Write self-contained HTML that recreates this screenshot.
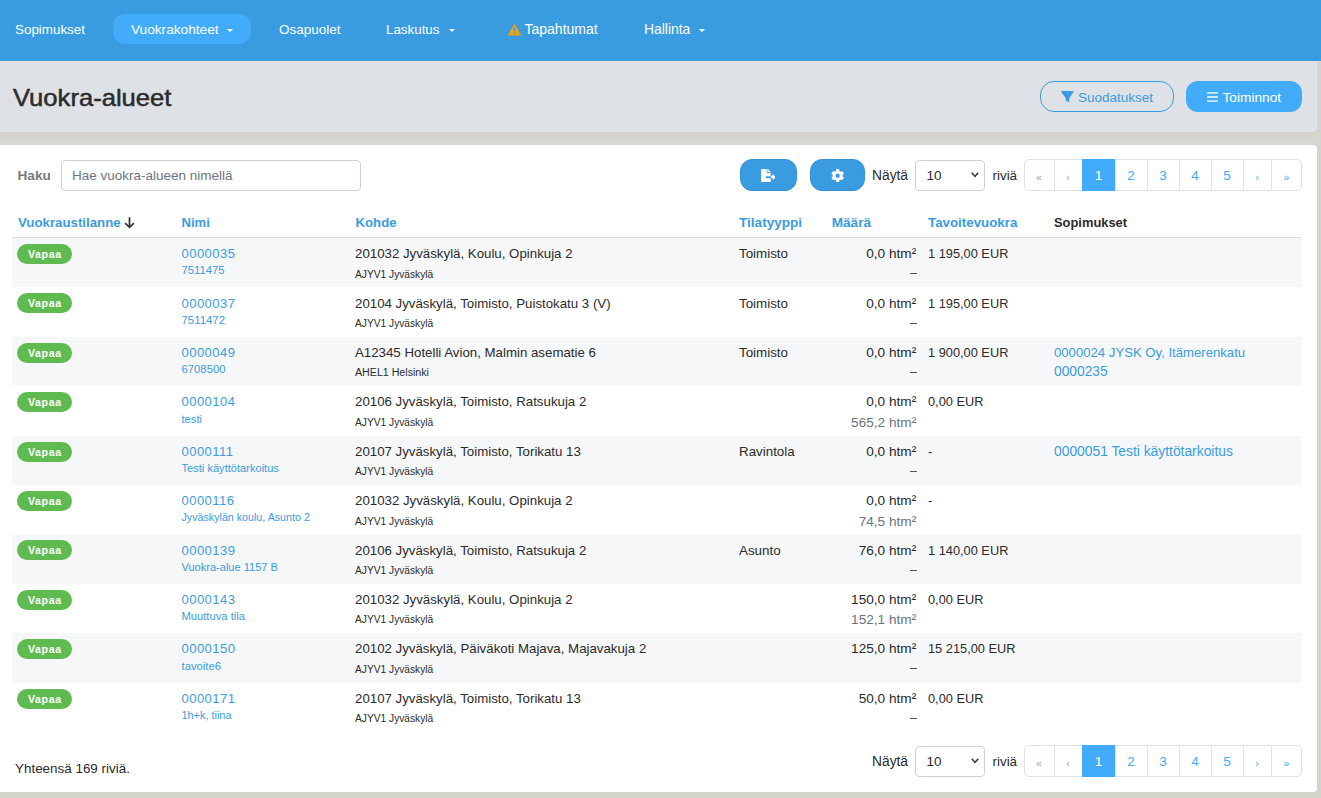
<!DOCTYPE html>
<html><head><meta charset="utf-8"><title>Vuokra-alueet</title><style>
*{margin:0;padding:0;box-sizing:border-box}
html,body{width:1321px;height:798px;overflow:hidden;background:#d5d5ce;font-family:"Liberation Sans", sans-serif}
.t{position:absolute;white-space:nowrap}
#nav{position:absolute;left:0;top:0;width:1321px;height:61px;background:#3a9ce0}
.pill{position:absolute;border-radius:12px}
.caret{position:absolute;width:0;height:0;border-left:3px solid transparent;border-right:3px solid transparent;border-top:3px solid #fff}
#hdr{position:absolute;left:0;top:61px;width:1317px;height:71px;background:#dee1e5;border-radius:0 0 4px 0}
#card{position:absolute;left:0;top:145px;width:1317px;height:647px;background:#fff;border-radius:0 4px 4px 0}
.btn{position:absolute;border-radius:12px}
.inp{position:absolute;border:1px solid #ccd2d9;border-radius:4px;background:#fff}
.ibtn{position:absolute;border-radius:12px;background:#3a9ce0;border:1px solid #3591d4}
.pg{position:absolute;border:1px solid #dee2e6;border-radius:5px;height:32px !important;width:278px !important}
.badge{position:absolute;left:17px;width:55px;height:20px;border-radius:10px;background:#5fbb4f;color:#fff;font-weight:bold;font-size:10.6px;letter-spacing:0.65px;padding-left:0.65px;line-height:20px;text-align:center}
</style></head><body>
<div id="nav"></div>
<div class="pill" style="left:113px;top:14px;width:138px;height:30px;background:#42acfb"></div>
<div class="t " style="left:15px;top:22.1px;font-size:13.4px;line-height:15px;color:#fff;font-weight:normal;">Sopimukset</div>
<div class="t " style="left:131px;top:22.1px;font-size:13.66px;line-height:15px;color:#fff;font-weight:normal;">Vuokrakohteet</div>
<div class="caret" style="left:227px;top:29px"></div>
<div class="t " style="left:279px;top:22.1px;font-size:13.47px;line-height:15px;color:#fff;font-weight:normal;">Osapuolet</div>
<div class="t " style="left:386px;top:22.1px;font-size:13.37px;line-height:15px;color:#fff;font-weight:normal;">Laskutus</div>
<div class="caret" style="left:449px;top:29px"></div>
<svg style="position:absolute;left:508px;top:23.5px" width="13" height="12" viewBox="0 0 13 12"><path d="M6.5 0.8 L12.3 10.9 H0.7 Z" fill="#f0a00f" stroke="#f0a00f" stroke-width="1.2" stroke-linejoin="round"/><rect x="5.85" y="3.3" width="1.3" height="4.1" rx="0.6" fill="#3a9ce0"/><rect x="5.85" y="8.6" width="1.3" height="1.5" rx="0.6" fill="#3a9ce0"/></svg>
<div class="t " style="left:524.5px;top:21.1px;font-size:14.0px;line-height:16px;color:#fff;font-weight:normal;">Tapahtumat</div>
<div class="t " style="left:644px;top:21.1px;font-size:13.9px;line-height:16px;color:#fff;font-weight:normal;">Hallinta</div>
<div class="caret" style="left:699px;top:29px"></div>
<div id="hdr"></div>
<div class="t " style="left:12.8px;top:84.8px;font-size:23.6px;line-height:26px;color:#2b2b2b;font-weight:normal;-webkit-text-stroke:0.5px #2b2b2b;transform:scaleX(1.085);transform-origin:0 0;">Vuokra-alueet</div>
<div class="btn" style="left:1040px;top:81px;width:134px;height:31px;border:1px solid #3a9ce0;border-radius:14px;"></div>
<svg style="position:absolute;left:1061px;top:90.5px" width="13" height="12" viewBox="0 0 13 12"><path d="M0 0.7 Q0 0 0.7 0 H12.3 Q13 0 12.7 0.6 L8.2 7.6 V11.3 L4.9 9.8 V7.6 L0.3 0.9 Z" fill="#3a9ce0"/></svg>
<div class="t " style="left:1078px;top:90px;font-size:13.5px;line-height:15px;color:#3a9ce0;font-weight:normal;">Suodatukset</div>
<div class="btn" style="left:1186px;top:81px;width:116px;height:31px;background:#42acfb"></div>
<svg style="position:absolute;left:1207px;top:92px" width="11" height="10" viewBox="0 0 11 10"><rect x="0" y="0.2" width="11" height="1.3" rx="0.5" fill="#fff"/><rect x="0" y="4.35" width="11" height="1.3" rx="0.5" fill="#fff"/><rect x="0" y="8.5" width="11" height="1.3" rx="0.5" fill="#fff"/></svg>
<div class="t " style="left:1222.5px;top:90px;font-size:13.7px;line-height:15px;color:#fff;font-weight:normal;">Toiminnot</div>
<div style="position:absolute;left:0;top:132px;width:1317px;height:13px;background:linear-gradient(#d2d2cb,#d9d9d3)"></div>
<div id="card"></div>
<div class="t " style="left:17.5px;top:168px;font-size:13.6px;line-height:15px;color:#7a7a7a;font-weight:bold;">Haku</div>
<div class="inp" style="left:61px;top:160px;width:300px;height:31px"></div>
<div class="t " style="left:72px;top:168px;font-size:13.5px;line-height:15px;color:#6c757d;font-weight:normal;">Hae vuokra-alueen nimellä</div>
<div class="ibtn" style="left:740px;top:159px;width:57px;height:32px"></div>
<svg style="position:absolute;left:760.8px;top:169px" width="14.6" height="13" viewBox="0 0 576 512"><path fill="#fff" d="M384 121.9c0-6.3-2.5-12.4-7-16.9L279.1 7c-4.5-4.5-10.6-7-17-7H256v128h128zM571 308l-95.7-96.4c-10.1-10.1-27.4-3-27.4 11.3V288h-64v64h64v65.2c0 14.3 17.3 21.4 27.4 11.3L571 332c6.6-6.6 6.6-17.4 0-24zm-379 28v-32c0-8.8 7.2-16 16-16h176V160H248c-13.2 0-24-10.8-24-24V0H24C10.7 0 0 10.7 0 24v464c0 13.3 10.7 24 24 24h336c13.3 0 24-10.7 24-24V368H208c-8.8 0-16-7.2-16-16z"/></svg>
<div class="ibtn" style="left:810px;top:159px;width:55px;height:32px"></div>
<svg style="position:absolute;left:830.6px;top:168.7px" width="13.3" height="13.3" viewBox="0 0 512 512"><path fill="#fff" d="M487.4 315.7l-42.6-24.6c4.3-23.2 4.3-47 0-70.2l42.6-24.6c4.9-2.8 7.1-8.6 5.5-14-11.1-35.6-30-67.8-54.7-94.6-3.8-4.1-10-5.1-14.8-2.3L380.8 110c-17.9-15.4-38.5-27.3-60.8-35.1V25.8c0-5.6-3.9-10.5-9.4-11.7-36.7-8.2-74.3-7.8-109.2 0-5.5 1.2-9.4 6.1-9.4 11.7V75c-22.2 7.9-42.8 19.8-60.8 35.1L88.7 85.5c-4.9-2.8-11-1.9-14.8 2.3-24.7 26.7-43.6 58.9-54.7 94.6-1.7 5.4.6 11.2 5.5 14L67.3 221c-4.300 23.2-4.3 47 0 70.2l-42.6 24.6c-4.9 2.8-7.1 8.6-5.5 14 11.1 35.6 30 67.8 54.7 94.6 3.8 4.1 10 5.1 14.8 2.3l42.6-24.6c17.9 15.4 38.5 27.3 60.8 35.1v49.2c0 5.6 3.9 10.5 9.4 11.7 36.7 8.2 74.3 7.8 109.2 0 5.5-1.2 9.4-6.1 9.4-11.7v-49.2c22.2-7.9 42.8-19.8 60.8-35.1l42.6 24.6c4.9 2.8 11 1.9 14.8-2.3 24.7-26.7 43.6-58.9 54.7-94.6 1.5-5.5-.7-11.3-5.6-14.1zM256 336c-44.1 0-80-35.9-80-80s35.9-80 80-80 80 35.9 80 80-35.9 80-80 80z"/></svg>
<div class="t " style="left:872px;top:168px;font-size:13.8px;line-height:15px;color:#2b2b2b;font-weight:normal;">Näytä</div><div class="inp" style="left:915px;top:160px;width:70px;height:31px"></div><div class="t " style="left:926.5px;top:168px;font-size:13.5px;line-height:15px;color:#2b2b2b;font-weight:normal;">10</div><svg style="position:absolute;left:971px;top:172px" width="8" height="6" viewBox="0 0 8 6"><path d="M0.8 0.8 L4 4.4 L7.2 0.8" fill="none" stroke="#333" stroke-width="1.5"/></svg><div class="t " style="left:992.5px;top:168px;font-size:13.4px;line-height:15px;color:#2b2b2b;font-weight:normal;">riviä</div><div class="pg" style="left:1024px;top:159px;width:275px;height:30px"></div><div class="t" style="left:1024px;top:168.5px;width:30px;text-align:center;font-size:10.5px;line-height:16px;color:#9aa0a6">«</div><div style="position:absolute;left:1054px;top:159px;width:1px;height:32px;background:#dee2e6"></div><div class="t" style="left:1054px;top:168.5px;width:28px;text-align:center;font-size:10.5px;line-height:16px;color:#9aa0a6">‹</div><div style="position:absolute;left:1082px;top:159px;width:1px;height:32px;background:#dee2e6"></div><div style="position:absolute;left:1082px;top:159px;width:34px;height:32px;background:#42acfb"></div><div class="t" style="left:1082px;top:168px;width:33px;text-align:center;font-size:13.5px;line-height:16px;color:#fff">1</div><div style="position:absolute;left:1115px;top:159px;width:1px;height:32px;background:#dee2e6"></div><div class="t" style="left:1115px;top:168px;width:32px;text-align:center;font-size:13.5px;line-height:16px;color:#42acfb">2</div><div style="position:absolute;left:1147px;top:159px;width:1px;height:32px;background:#dee2e6"></div><div class="t" style="left:1147px;top:168px;width:32px;text-align:center;font-size:13.5px;line-height:16px;color:#42acfb">3</div><div style="position:absolute;left:1179px;top:159px;width:1px;height:32px;background:#dee2e6"></div><div class="t" style="left:1179px;top:168px;width:32px;text-align:center;font-size:13.5px;line-height:16px;color:#42acfb">4</div><div style="position:absolute;left:1211px;top:159px;width:1px;height:32px;background:#dee2e6"></div><div class="t" style="left:1211px;top:168px;width:32px;text-align:center;font-size:13.5px;line-height:16px;color:#42acfb">5</div><div style="position:absolute;left:1243px;top:159px;width:1px;height:32px;background:#dee2e6"></div><div class="t" style="left:1243px;top:168.5px;width:28px;text-align:center;font-size:10.5px;line-height:16px;color:#42acfb">›</div><div style="position:absolute;left:1271px;top:159px;width:1px;height:32px;background:#dee2e6"></div><div class="t" style="left:1271px;top:168.5px;width:31px;text-align:center;font-size:10.5px;line-height:16px;color:#42acfb">»</div>
<div class="t " style="left:18px;top:215px;font-size:13.26px;line-height:15px;color:#3a9ce0;font-weight:bold;">Vuokraustilanne</div>
<svg style="position:absolute;left:123.7px;top:216.8px" width="11" height="12" viewBox="0 0 11 12"><path d="M5.5 0.3 V10.2 M1.1 6.1 L5.5 10.4 L9.9 6.1" fill="none" stroke="#333" stroke-width="1.7"/></svg>
<div class="t " style="left:181.5px;top:215px;font-size:13.1px;line-height:15px;color:#3a9ce0;font-weight:bold;">Nimi</div>
<div class="t " style="left:355.5px;top:215px;font-size:13.2px;line-height:15px;color:#3a9ce0;font-weight:bold;">Kohde</div>
<div class="t " style="left:739px;top:215px;font-size:13.59px;line-height:15px;color:#3a9ce0;font-weight:bold;">Tilatyyppi</div>
<div class="t " style="left:831.7px;top:215px;font-size:13.6px;line-height:15px;color:#3a9ce0;font-weight:bold;">Määrä</div>
<div class="t " style="left:928px;top:215px;font-size:13.33px;line-height:15px;color:#3a9ce0;font-weight:bold;">Tavoitevuokra</div>
<div class="t " style="left:1054px;top:215px;font-size:12.9px;line-height:15px;color:#2b2b2b;font-weight:bold;">Sopimukset</div>
<div style="position:absolute;left:12px;top:237px;width:1290px;height:1px;background:#dcdfe2"></div>
<div style="position:absolute;left:12px;top:238px;width:1290px;height:49px;background:#f6f7f9"></div>
<div class="badge" style="left:17px;top:244.0px">Vapaa</div>
<div class="t " style="left:181.5px;top:246.2px;font-size:13.0px;line-height:15px;color:#3a9ce0;font-weight:normal;letter-spacing:0.46px;">0000035</div>
<div class="t " style="left:181.5px;top:264.4px;font-size:11.3px;line-height:12px;color:#3a9ce0;font-weight:normal;">7511475</div>
<div class="t " style="left:355px;top:246.2px;font-size:13.27px;line-height:15px;color:#2b2b2b;font-weight:normal;">201032 Jyväskylä, Koulu, Opinkuja 2</div>
<div class="t " style="left:355px;top:268.5px;font-size:10.21px;line-height:11px;color:#2b2b2b;font-weight:normal;">AJYV1 Jyväskylä</div>
<div class="t " style="left:739px;top:246.2px;font-size:13.36px;line-height:15px;color:#2b2b2b;font-weight:normal;">Toimisto</div>
<div class="t " style="right:404.8px;top:246.2px;font-size:13.63px;line-height:15px;color:#2b2b2b;font-weight:normal;">0,0 htm²</div>
<div style="position:absolute;left:910px;top:273.2px;width:7px;height:1px;background:#555"></div>
<div class="t " style="left:928px;top:246.2px;font-size:12.8px;line-height:15px;color:#2b2b2b;font-weight:normal;">1 195,00 EUR</div>
<div class="badge" style="left:17px;top:293.4px">Vapaa</div>
<div class="t " style="left:181.5px;top:295.6px;font-size:13.0px;line-height:15px;color:#3a9ce0;font-weight:normal;letter-spacing:0.46px;">0000037</div>
<div class="t " style="left:181.5px;top:313.8px;font-size:11.4px;line-height:12px;color:#3a9ce0;font-weight:normal;">7511472</div>
<div class="t " style="left:355px;top:295.6px;font-size:13.27px;line-height:15px;color:#2b2b2b;font-weight:normal;">20104 Jyväskylä, Toimisto, Puistokatu 3 (V)</div>
<div class="t " style="left:355px;top:317.9px;font-size:10.21px;line-height:11px;color:#2b2b2b;font-weight:normal;">AJYV1 Jyväskylä</div>
<div class="t " style="left:739px;top:295.6px;font-size:13.36px;line-height:15px;color:#2b2b2b;font-weight:normal;">Toimisto</div>
<div class="t " style="right:404.8px;top:295.6px;font-size:13.63px;line-height:15px;color:#2b2b2b;font-weight:normal;">0,0 htm²</div>
<div style="position:absolute;left:910px;top:322.59999999999997px;width:7px;height:1px;background:#555"></div>
<div class="t " style="left:928px;top:295.6px;font-size:12.8px;line-height:15px;color:#2b2b2b;font-weight:normal;">1 195,00 EUR</div>
<div style="position:absolute;left:12px;top:337px;width:1290px;height:49px;background:#f6f7f9"></div>
<div class="badge" style="left:17px;top:342.8px">Vapaa</div>
<div class="t " style="left:181.5px;top:345.0px;font-size:13.0px;line-height:15px;color:#3a9ce0;font-weight:normal;letter-spacing:0.46px;">0000049</div>
<div class="t " style="left:181.5px;top:363.2px;font-size:11.3px;line-height:12px;color:#3a9ce0;font-weight:normal;">6708500</div>
<div class="t " style="left:355px;top:345.0px;font-size:13.27px;line-height:15px;color:#2b2b2b;font-weight:normal;">A12345 Hotelli Avion, Malmin asematie 6</div>
<div class="t " style="left:355px;top:366.3px;font-size:10.65px;line-height:12px;color:#2b2b2b;font-weight:normal;">AHEL1 Helsinki</div>
<div class="t " style="left:739px;top:345.0px;font-size:13.36px;line-height:15px;color:#2b2b2b;font-weight:normal;">Toimisto</div>
<div class="t " style="right:404.8px;top:345.0px;font-size:13.63px;line-height:15px;color:#2b2b2b;font-weight:normal;">0,0 htm²</div>
<div style="position:absolute;left:910px;top:372.0px;width:7px;height:1px;background:#555"></div>
<div class="t " style="left:928px;top:345.0px;font-size:12.8px;line-height:15px;color:#2b2b2b;font-weight:normal;">1 900,00 EUR</div>
<div class="t " style="left:1054px;top:345.0px;font-size:13.15px;line-height:15px;color:#3a9ce0;font-weight:normal;">0000024 JYSK Oy, Itämerenkatu</div>
<div class="t " style="left:1054px;top:364.0px;font-size:13.8px;line-height:15px;color:#3a9ce0;font-weight:normal;">0000235</div>
<div class="badge" style="left:17px;top:392.2px">Vapaa</div>
<div class="t " style="left:181.5px;top:394.4px;font-size:13.0px;line-height:15px;color:#3a9ce0;font-weight:normal;letter-spacing:0.46px;">0000104</div>
<div class="t " style="left:181.5px;top:412.6px;font-size:11.2px;line-height:12px;color:#3a9ce0;font-weight:normal;">testi</div>
<div class="t " style="left:355px;top:394.4px;font-size:13.27px;line-height:15px;color:#2b2b2b;font-weight:normal;">20106 Jyväskylä, Toimisto, Ratsukuja 2</div>
<div class="t " style="left:355px;top:416.7px;font-size:10.21px;line-height:11px;color:#2b2b2b;font-weight:normal;">AJYV1 Jyväskylä</div>
<div class="t " style="right:404.8px;top:394.4px;font-size:13.63px;line-height:15px;color:#2b2b2b;font-weight:normal;">0,0 htm²</div>
<div class="t " style="right:404.8px;top:414.7px;font-size:13.63px;line-height:15px;color:#6c757d;font-weight:normal;">565,2 htm²</div>
<div class="t " style="left:928px;top:394.4px;font-size:12.8px;line-height:15px;color:#2b2b2b;font-weight:normal;">0,00 EUR</div>
<div style="position:absolute;left:12px;top:436px;width:1290px;height:49px;background:#f6f7f9"></div>
<div class="badge" style="left:17px;top:441.6px">Vapaa</div>
<div class="t " style="left:181.5px;top:443.8px;font-size:13.0px;line-height:15px;color:#3a9ce0;font-weight:normal;letter-spacing:0.46px;">0000111</div>
<div class="t " style="left:181.5px;top:462.0px;font-size:11.1px;line-height:12px;color:#3a9ce0;font-weight:normal;">Testi käyttötarkoitus</div>
<div class="t " style="left:355px;top:443.8px;font-size:13.27px;line-height:15px;color:#2b2b2b;font-weight:normal;">20107 Jyväskylä, Toimisto, Torikatu 13</div>
<div class="t " style="left:355px;top:466.1px;font-size:10.21px;line-height:11px;color:#2b2b2b;font-weight:normal;">AJYV1 Jyväskylä</div>
<div class="t " style="left:739px;top:443.8px;font-size:13.36px;line-height:15px;color:#2b2b2b;font-weight:normal;">Ravintola</div>
<div class="t " style="right:404.8px;top:443.8px;font-size:13.63px;line-height:15px;color:#2b2b2b;font-weight:normal;">0,0 htm²</div>
<div style="position:absolute;left:910px;top:470.8px;width:7px;height:1px;background:#555"></div>
<div class="t " style="left:928px;top:443.8px;font-size:12.8px;line-height:15px;color:#2b2b2b;font-weight:normal;">-</div>
<div class="t " style="left:1054px;top:442.8px;font-size:13.84px;line-height:16px;color:#3a9ce0;font-weight:normal;">0000051 Testi käyttötarkoitus</div>
<div class="badge" style="left:17px;top:491.0px">Vapaa</div>
<div class="t " style="left:181.5px;top:493.2px;font-size:13.0px;line-height:15px;color:#3a9ce0;font-weight:normal;letter-spacing:0.46px;">0000116</div>
<div class="t " style="left:181.5px;top:511.4px;font-size:10.7px;line-height:12px;color:#3a9ce0;font-weight:normal;">Jyväskylän koulu, Asunto 2</div>
<div class="t " style="left:355px;top:493.2px;font-size:13.27px;line-height:15px;color:#2b2b2b;font-weight:normal;">201032 Jyväskylä, Koulu, Opinkuja 2</div>
<div class="t " style="left:355px;top:515.5px;font-size:10.21px;line-height:11px;color:#2b2b2b;font-weight:normal;">AJYV1 Jyväskylä</div>
<div class="t " style="right:404.8px;top:493.2px;font-size:13.63px;line-height:15px;color:#2b2b2b;font-weight:normal;">0,0 htm²</div>
<div class="t " style="right:404.8px;top:513.5px;font-size:13.63px;line-height:15px;color:#6c757d;font-weight:normal;">74,5 htm²</div>
<div class="t " style="left:928px;top:493.2px;font-size:12.8px;line-height:15px;color:#2b2b2b;font-weight:normal;">-</div>
<div style="position:absolute;left:12px;top:534px;width:1290px;height:50px;background:#f6f7f9"></div>
<div class="badge" style="left:17px;top:540.4px">Vapaa</div>
<div class="t " style="left:181.5px;top:542.6px;font-size:13.0px;line-height:15px;color:#3a9ce0;font-weight:normal;letter-spacing:0.46px;">0000139</div>
<div class="t " style="left:181.5px;top:560.8px;font-size:11.06px;line-height:12px;color:#3a9ce0;font-weight:normal;">Vuokra-alue 1157 B</div>
<div class="t " style="left:355px;top:542.6px;font-size:13.27px;line-height:15px;color:#2b2b2b;font-weight:normal;">20106 Jyväskylä, Toimisto, Ratsukuja 2</div>
<div class="t " style="left:355px;top:564.9px;font-size:10.21px;line-height:11px;color:#2b2b2b;font-weight:normal;">AJYV1 Jyväskylä</div>
<div class="t " style="left:739px;top:542.6px;font-size:13.36px;line-height:15px;color:#2b2b2b;font-weight:normal;">Asunto</div>
<div class="t " style="right:404.8px;top:542.6px;font-size:13.63px;line-height:15px;color:#2b2b2b;font-weight:normal;">76,0 htm²</div>
<div style="position:absolute;left:910px;top:569.6px;width:7px;height:1px;background:#555"></div>
<div class="t " style="left:928px;top:542.6px;font-size:12.8px;line-height:15px;color:#2b2b2b;font-weight:normal;">1 140,00 EUR</div>
<div class="badge" style="left:17px;top:589.8px">Vapaa</div>
<div class="t " style="left:181.5px;top:592.0px;font-size:13.0px;line-height:15px;color:#3a9ce0;font-weight:normal;letter-spacing:0.46px;">0000143</div>
<div class="t " style="left:181.5px;top:610.2px;font-size:11.2px;line-height:12px;color:#3a9ce0;font-weight:normal;">Muuttuva tila</div>
<div class="t " style="left:355px;top:592.0px;font-size:13.27px;line-height:15px;color:#2b2b2b;font-weight:normal;">201032 Jyväskylä, Koulu, Opinkuja 2</div>
<div class="t " style="left:355px;top:614.3px;font-size:10.21px;line-height:11px;color:#2b2b2b;font-weight:normal;">AJYV1 Jyväskylä</div>
<div class="t " style="right:404.8px;top:592.0px;font-size:13.63px;line-height:15px;color:#2b2b2b;font-weight:normal;">150,0 htm²</div>
<div class="t " style="right:404.8px;top:612.3px;font-size:13.63px;line-height:15px;color:#6c757d;font-weight:normal;">152,1 htm²</div>
<div class="t " style="left:928px;top:592.0px;font-size:12.8px;line-height:15px;color:#2b2b2b;font-weight:normal;">0,00 EUR</div>
<div style="position:absolute;left:12px;top:633px;width:1290px;height:50px;background:#f6f7f9"></div>
<div class="badge" style="left:17px;top:639.2px">Vapaa</div>
<div class="t " style="left:181.5px;top:641.4px;font-size:13.0px;line-height:15px;color:#3a9ce0;font-weight:normal;letter-spacing:0.46px;">0000150</div>
<div class="t " style="left:181.5px;top:659.6px;font-size:11.28px;line-height:12px;color:#3a9ce0;font-weight:normal;">tavoite6</div>
<div class="t " style="left:355px;top:641.4px;font-size:13.27px;line-height:15px;color:#2b2b2b;font-weight:normal;">20102 Jyväskylä, Päiväkoti Majava, Majavakuja 2</div>
<div class="t " style="left:355px;top:663.7px;font-size:10.21px;line-height:11px;color:#2b2b2b;font-weight:normal;">AJYV1 Jyväskylä</div>
<div class="t " style="right:404.8px;top:641.4px;font-size:13.63px;line-height:15px;color:#2b2b2b;font-weight:normal;">125,0 htm²</div>
<div style="position:absolute;left:910px;top:668.4000000000001px;width:7px;height:1px;background:#555"></div>
<div class="t " style="left:928px;top:641.4px;font-size:12.8px;line-height:15px;color:#2b2b2b;font-weight:normal;">15 215,00 EUR</div>
<div class="badge" style="left:17px;top:688.5999999999999px">Vapaa</div>
<div class="t " style="left:181.5px;top:690.8px;font-size:13.0px;line-height:15px;color:#3a9ce0;font-weight:normal;letter-spacing:0.46px;">0000171</div>
<div class="t " style="left:181.5px;top:709.0px;font-size:10.9px;line-height:12px;color:#3a9ce0;font-weight:normal;">1h+k, tiina</div>
<div class="t " style="left:355px;top:690.8px;font-size:13.27px;line-height:15px;color:#2b2b2b;font-weight:normal;">20107 Jyväskylä, Toimisto, Torikatu 13</div>
<div class="t " style="left:355px;top:713.1px;font-size:10.21px;line-height:11px;color:#2b2b2b;font-weight:normal;">AJYV1 Jyväskylä</div>
<div class="t " style="right:404.8px;top:690.8px;font-size:13.63px;line-height:15px;color:#2b2b2b;font-weight:normal;">50,0 htm²</div>
<div style="position:absolute;left:910px;top:717.8px;width:7px;height:1px;background:#555"></div>
<div class="t " style="left:928px;top:690.8px;font-size:12.8px;line-height:15px;color:#2b2b2b;font-weight:normal;">0,00 EUR</div>
<div class="t " style="left:15px;top:761px;font-size:13.43px;line-height:15px;color:#2b2b2b;font-weight:normal;">Yhteensä 169 riviä.</div>
<div class="t " style="left:872px;top:754px;font-size:13.8px;line-height:15px;color:#2b2b2b;font-weight:normal;">Näytä</div><div class="inp" style="left:915px;top:746px;width:70px;height:31px"></div><div class="t " style="left:926.5px;top:754px;font-size:13.5px;line-height:15px;color:#2b2b2b;font-weight:normal;">10</div><svg style="position:absolute;left:971px;top:758px" width="8" height="6" viewBox="0 0 8 6"><path d="M0.8 0.8 L4 4.4 L7.2 0.8" fill="none" stroke="#333" stroke-width="1.5"/></svg><div class="t " style="left:992.5px;top:754px;font-size:13.4px;line-height:15px;color:#2b2b2b;font-weight:normal;">riviä</div><div class="pg" style="left:1024px;top:745px;width:275px;height:30px"></div><div class="t" style="left:1024px;top:754.5px;width:30px;text-align:center;font-size:10.5px;line-height:16px;color:#9aa0a6">«</div><div style="position:absolute;left:1054px;top:745px;width:1px;height:32px;background:#dee2e6"></div><div class="t" style="left:1054px;top:754.5px;width:28px;text-align:center;font-size:10.5px;line-height:16px;color:#9aa0a6">‹</div><div style="position:absolute;left:1082px;top:745px;width:1px;height:32px;background:#dee2e6"></div><div style="position:absolute;left:1082px;top:745px;width:34px;height:32px;background:#42acfb"></div><div class="t" style="left:1082px;top:754px;width:33px;text-align:center;font-size:13.5px;line-height:16px;color:#fff">1</div><div style="position:absolute;left:1115px;top:745px;width:1px;height:32px;background:#dee2e6"></div><div class="t" style="left:1115px;top:754px;width:32px;text-align:center;font-size:13.5px;line-height:16px;color:#42acfb">2</div><div style="position:absolute;left:1147px;top:745px;width:1px;height:32px;background:#dee2e6"></div><div class="t" style="left:1147px;top:754px;width:32px;text-align:center;font-size:13.5px;line-height:16px;color:#42acfb">3</div><div style="position:absolute;left:1179px;top:745px;width:1px;height:32px;background:#dee2e6"></div><div class="t" style="left:1179px;top:754px;width:32px;text-align:center;font-size:13.5px;line-height:16px;color:#42acfb">4</div><div style="position:absolute;left:1211px;top:745px;width:1px;height:32px;background:#dee2e6"></div><div class="t" style="left:1211px;top:754px;width:32px;text-align:center;font-size:13.5px;line-height:16px;color:#42acfb">5</div><div style="position:absolute;left:1243px;top:745px;width:1px;height:32px;background:#dee2e6"></div><div class="t" style="left:1243px;top:754.5px;width:28px;text-align:center;font-size:10.5px;line-height:16px;color:#42acfb">›</div><div style="position:absolute;left:1271px;top:745px;width:1px;height:32px;background:#dee2e6"></div><div class="t" style="left:1271px;top:754.5px;width:31px;text-align:center;font-size:10.5px;line-height:16px;color:#42acfb">»</div>
</body></html>
